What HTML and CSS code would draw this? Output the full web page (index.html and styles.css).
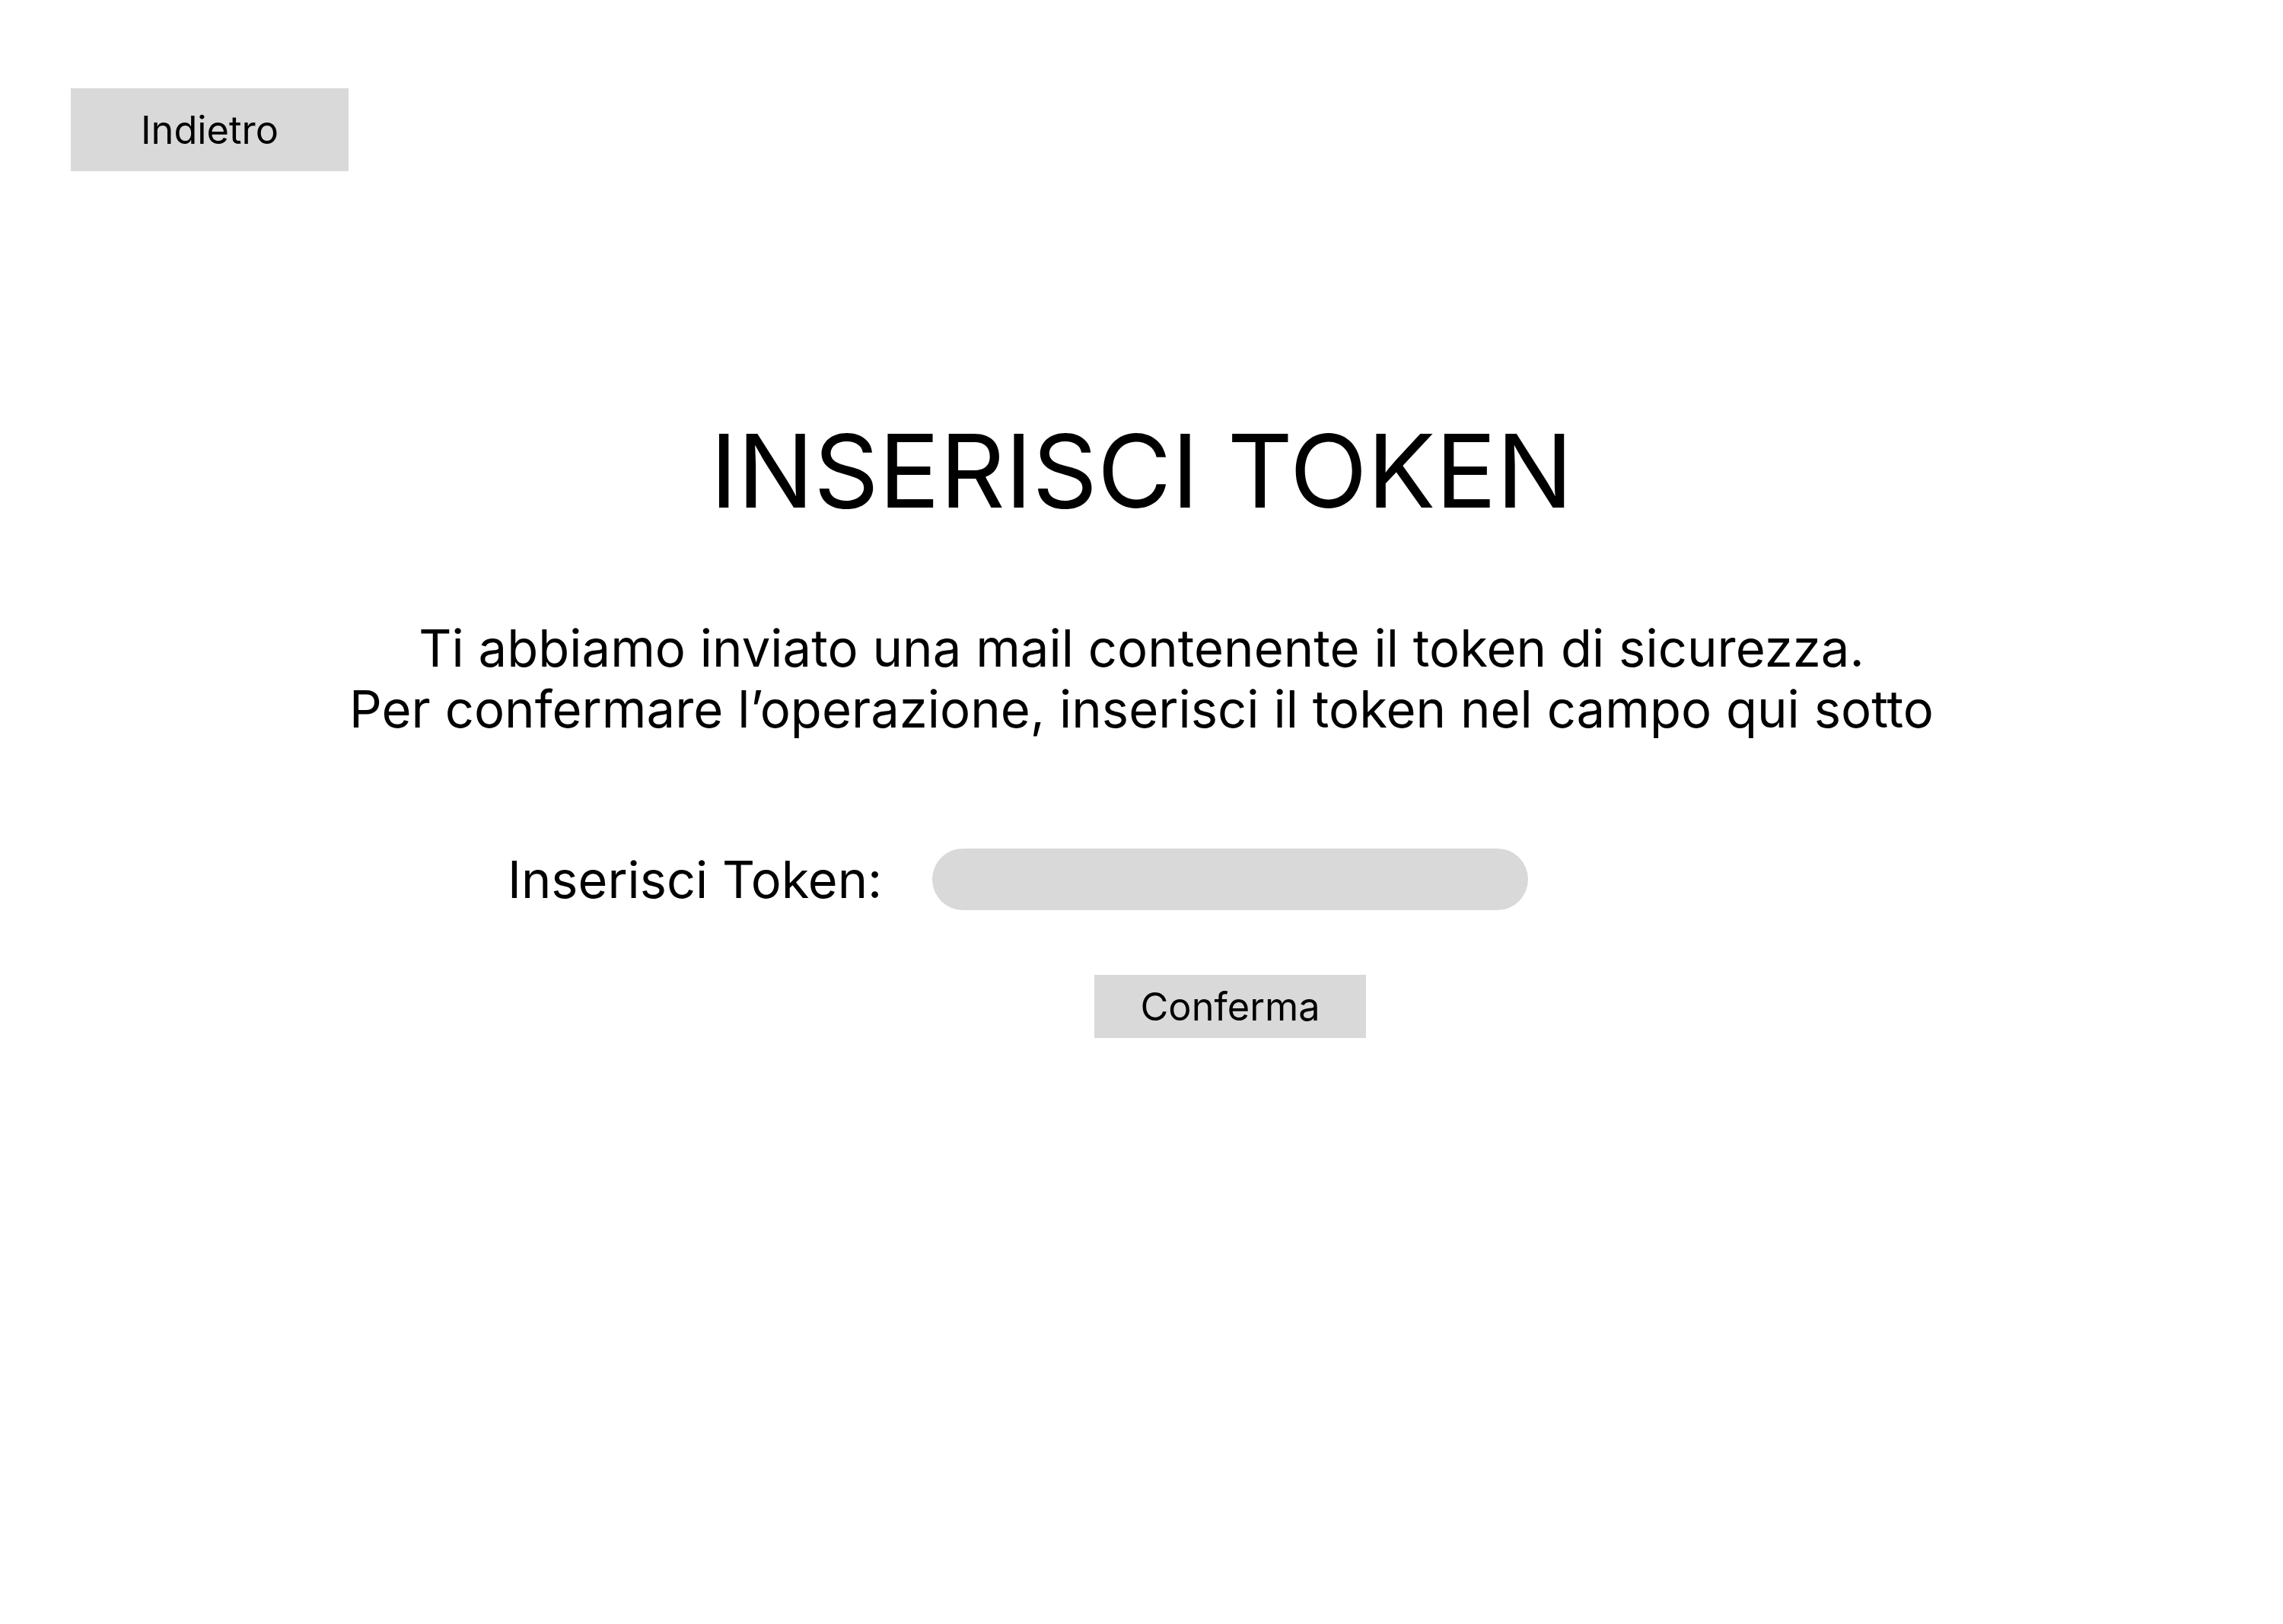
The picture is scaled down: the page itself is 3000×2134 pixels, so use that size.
FILE: index.html
```html
<!DOCTYPE html>
<html lang="it">
<head>
<meta charset="utf-8">
<title>Inserisci Token</title>
<link rel="stylesheet" href="styles.css">
</head>
<body>
<div class="page">
  <header class="topbar">
    <button class="btn btn-back" type="button">Indietro</button>
  </header>
  <main class="content">
    <h1 class="title">INSERISCI TOKEN</h1>
    <p class="desc">Ti abbiamo inviato una mail contenente il token di sicurezza.<br>Per confermare l’operazione, inserisci il token nel campo qui sotto</p>
    <form class="token-form">
      <label class="token-label" for="token">Inserisci Token:</label>
      <input class="token-input" id="token" type="text">
      <button class="btn btn-confirm" type="button">Conferma</button>
    </form>
  </main>
</div>
</body>
</html>
```
FILE: styles.css
```css
html, body {
  margin: 0;
  padding: 0;
  background: #ffffff;
}

body {
  font-family: Inter, "Noto Sans", sans-serif;
  color: #000000;
}

.page {
  width: 3000px;
  min-height: 2134px;
  box-sizing: border-box;
  padding-top: 116px;
}

.topbar {
  display: flex;
  padding-left: 93px;
}

.btn {
  font-family: Inter, "Noto Sans", sans-serif;
  font-size: 50.5px;
  font-weight: 400;
  color: #000000;
  background: #d9d9d9;
  border: none;
  border-radius: 0;
  padding: 0;
  margin: 0;
  display: flex;
  align-items: center;
  justify-content: center;
  cursor: pointer;
}

.btn-back {
  width: 365px;
  height: 109px;
}

.content {
  display: flex;
  flex-direction: column;
  align-items: center;
}

.title {
  margin: 313px 0 0 0;
  font-size: 133.3px;
  font-weight: 400;
  line-height: 161px;
  letter-spacing: 0;
  text-align: center;
}

.desc {
  margin: 113px 0 0 0;
  font-size: 67px;
  line-height: 80px;
  text-align: center;
}

.token-form {
  align-self: flex-start;
  margin: 143px 0 0 667px;
  display: grid;
  grid-template-columns: 488px 783px;
  column-gap: 70px;
  row-gap: 85px;
  align-items: center;
}

.token-label {
  font-size: 66.7px;
  line-height: 81px;
  white-space: nowrap;
}

.token-input {
  width: 783px;
  height: 81px;
  box-sizing: border-box;
  border: none;
  border-radius: 40.5px;
  background: #d9d9d9;
  padding: 0 40px;
  font-family: Inter, "Noto Sans", sans-serif;
  font-size: 50px;
  outline: none;
}

.btn-confirm {
  grid-column: 2;
  justify-self: center;
  width: 357px;
  height: 83px;
}
```
